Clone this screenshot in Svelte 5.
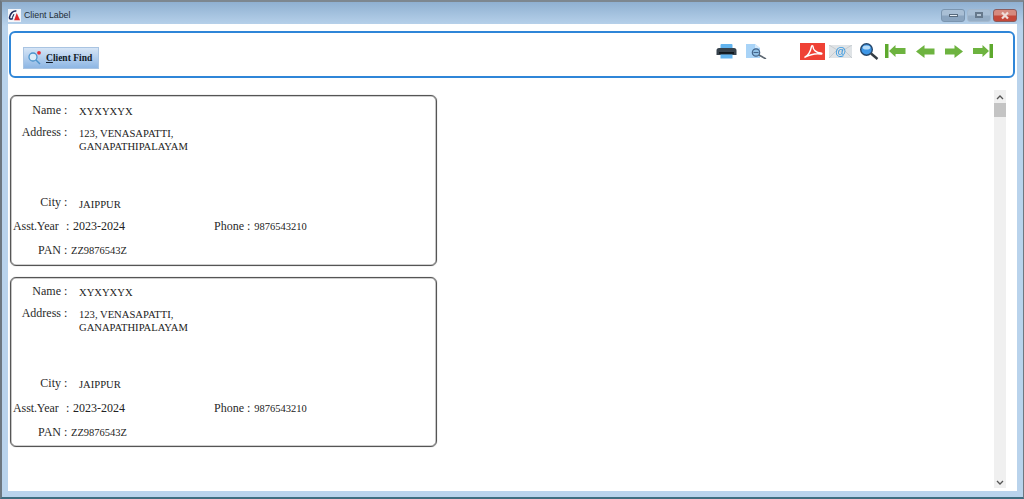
<script>
  const cards = [0, 1];
</script>

<div class="window">
  <header class="titlebar">
    <svg class="logo" width="13" height="13" viewBox="0 0 14 14">
      <rect width="14" height="14" fill="#f4f6fa"/>
      <path d="M9 2.2C5.500 1.600 2.200 5 1.600 9c-.3 2 1.600 2.400 3.600 1" fill="none" stroke="#1d2a5c" stroke-width="1.700"/>
      <path d="M6.400 5.500 4.600 9.500" stroke="#1d2a5c" stroke-width="1.200"/>
      <path d="M9.400 4.200 13 12.200H6.600Z" fill="#e0262b"/>
    </svg>
    <span class="wintitle">Client Label</span>
    <div class="wincontrols">
      <span class="wbtn min"><i></i></span>
      <span class="wbtn max"><i></i></span>
      <span class="wbtn close">
        <svg width="10" height="9" viewBox="0 0 10 9"><path d="M2 1.500l6 6M8 1.500l-6 6" stroke="#f0dcd8" stroke-width="2.200"/></svg>
      </span>
    </div>
  </header>

  <div class="client">
    <div class="toolbar">
      <button class="find">
        <svg width="15" height="15" viewBox="0 0 15 15">
          <circle cx="6" cy="7" r="4" fill="#dcecf8" stroke="#4b93cc" stroke-width="1.300"/>
          <path d="M9 10l4 4" stroke="#4b93cc" stroke-width="1.500"/>
          <circle cx="12" cy="2.800" r="1.900" fill="#e8323a"/>
        </svg>
        <span><u>C</u>lient Find</span>
      </button>
      <div class="tools">
        <svg class="printer" width="21" height="15" viewBox="0 0 21 15">
          <rect x="4.500" y="0" width="12" height="5" rx="1" fill="#62b4ef"/>
          <path d="M3 4h15a2.500 2.500 0 0 1 2.500 2.500V11H.5V6.500A2.500 2.500 0 0 1 3 4Z" fill="#37424c"/>
          <rect x="3" y="8" width="15" height="1.800" fill="#11181e"/>
          <rect x="4.500" y="10.500" width="12" height="4" fill="#62b4ef"/>
        </svg>
        <svg class="preview" width="21" height="15" viewBox="0 0 21 15">
          <path d="M0 0h9l5 4v10H0Z" fill="#a8d3f7"/>
          <path d="M9 0l5 4H9Z" fill="#d4e9fb"/>
          <circle cx="10" cy="8.500" r="3.700" fill="#8fbfe4" stroke="#44648a" stroke-width="1.200"/>
          <path d="M7.500 8.500h5" stroke="#44648a"/>
          <path d="M13 11l7 4" stroke="#5b6670" stroke-width="1.600"/>
        </svg>
        <svg class="pdf" width="25" height="17" viewBox="0 0 25 17">
          <rect width="25" height="17" fill="#ef4135"/>
          <path d="M4.500 14.500c3-1.500 6-6 7-11 .3-1.200 1.500-1.200 1.500 0 0 3 3 6.500 8 6.500 1.500 0 1 1.300-.5 1-4-.6-9-.2-16 3.500Z" fill="none" stroke="#fff" stroke-width="1.400"/>
        </svg>
        <svg class="mail" width="23" height="13" viewBox="0 0 23 13">
          <rect width="23" height="13" fill="#dfe3e6"/>
          <path d="M0 0l11.500 7L23 0M0 13l7-7M23 13l-7-7" fill="none" stroke="#c6ccd0"/>
          <text x="11.500" y="10" text-anchor="middle" font-size="11" font-family="Liberation Sans" fill="#3c9ae0" font-weight="700">@</text>
        </svg>
        <svg class="zoom" width="20" height="17" viewBox="0 0 20 17">
          <circle cx="7.500" cy="6.500" r="5.800" fill="#3d96e6" stroke="#26476b" stroke-width="1.400"/>
          <ellipse cx="7.500" cy="4.500" rx="3.800" ry="2" fill="#b6dcf8"/>
          <path d="M12 10.500l6.500 5.500" stroke="#333c44" stroke-width="2.400"/>
        </svg>
        <svg class="nav first" width="21" height="14" viewBox="0 0 21 14">
          <path d="M0 0h3.500v14H0Z" fill="#5ea92e"/><path d="M4 7l6.500-6v3H20.500v6H10.500V13Z" fill="#6db33f"/>
        </svg>
        <svg class="nav prev" width="19" height="13" viewBox="0 0 19 13">
          <path d="M0 6.500l8.500-6.500v3.500H18.500v6H8.500v3.500Z" fill="#6db33f"/>
        </svg>
        <svg class="nav next" width="18" height="13" viewBox="0 0 18 13">
          <path d="M18 6.500l-8.500-6.500v3.500H0v6h9.500v3.500Z" fill="#6db33f"/>
        </svg>
        <svg class="nav last" width="20" height="14" viewBox="0 0 20 14">
          <path d="M16.500 0H20v14h-3.500Z" fill="#5ea92e"/><path d="M16 7l-6.500-6v3H0v6h9.500V13Z" fill="#6db33f"/>
        </svg>
      </div>
    </div>

    <div class="body">
      <div class="cards">
        {#each cards as c}
          <section class="card">
            <div class="row r-name"><span class="lab">Name</span><span class="sep">:</span><span class="val">XYXYXYX</span></div>
            <div class="row r-addr"><span class="lab">Address</span><span class="sep">:</span><span class="val addr">123, VENASAPATTI,<br />GANAPATHIPALAYAM</span></div>
            <div class="row r-city"><span class="lab">City</span><span class="sep">:</span><span class="val">JAIPPUR</span></div>
            <div class="row r-year">
              <span class="lab yr">Asst.Year</span><span class="sep">:</span><span class="big">2023-2024</span>
              <span class="lab ph">Phone</span><span class="sep2">:</span><span class="val2">9876543210</span>
            </div>
            <div class="row r-pan"><span class="lab">PAN</span><span class="sep pan">:</span><span class="val2">ZZ9876543Z</span></div>
          </section>
        {/each}
      </div>
      <div class="scrollbar">
        <svg width="8" height="5" viewBox="0 0 8 5"><path d="M1 4l3-3 3 3" fill="none" stroke="#555" stroke-width="1.300"/></svg>
        <div class="thumb"></div>
        <div class="track"></div>
        <svg width="8" height="5" viewBox="0 0 8 5"><path d="M1 1l3 3 3-3" fill="none" stroke="#555" stroke-width="1.300"/></svg>
      </div>
    </div>
  </div>
</div>

<style>
  :global(body) { margin: 0; background: #fff; }
  .window {
    box-sizing: border-box;
    width: 1024px;
    height: 499px;
    display: flex;
    flex-direction: column;
    padding: 0 6px 6px;
    border-top: 2px solid #7d8790;
    border-bottom: 2px solid #3f6d80;
    border-left: 2px solid #6d7780;
    border-right: 1px solid #6d7780;
    background: linear-gradient(#8fb0d1 0, #b9d3ec 24px, #b9d3ec 100%);
    font-family: "Liberation Serif", serif;
    color: #222;
  }
  .titlebar {
    box-sizing: border-box;
    height: 22px;
    flex: none;
    display: flex;
    align-items: center;
    gap: 3px;
    padding-top: 4px;
  }
  .logo { flex: none; }
  .wintitle { font: 8.800px "Liberation Sans", sans-serif; color: #222c36; }
  .wincontrols { margin-left: auto; display: flex; gap: 2px; }
  .wbtn {
    box-sizing: border-box;
    height: 13px;
    display: flex;
    align-items: center;
    justify-content: center;
    border: 1px solid #7b95af;
    border-radius: 3px;
  }
  .min { width: 24px; background: linear-gradient(#a9bfd5 45%, #8aa4bf 55%); }
  .min i { width: 9px; height: 3px; background: #e4ebf2; border: 1px solid #56697c; box-sizing: border-box; }
  .max { width: 24px; background: linear-gradient(#a9bfd5 45%, #96aec6 55%); border-color: #a4b9ce; }
  .max i { width: 8px; height: 6px; border: 2px solid #66798c; background: #b5c6d6; box-sizing: border-box; }
  .close { width: 24px; background: linear-gradient(#d68a7f 45%, #c4483a 55%); border-color: #8c5b5b; }
  .client {
    flex: 1;
    min-height: 0;
    display: flex;
    flex-direction: column;
    background: #fff;
    padding: 7px 1px 0 1px;
  }
  .toolbar {
    box-sizing: border-box;
    height: 47px;
    margin-right: 1px;
    flex: none;
    display: flex;
    align-items: center;
    border: 2px solid #2f86d8;
    border-radius: 6px;
    padding: 0 20px 0 12px;
    background: #fff;
  }
  .find {
    box-sizing: border-box;
    width: 76px;
    height: 22px;
    padding: 0 0 0 3px;
    display: flex;
    align-items: center;
    gap: 4px;
    margin-top: 6px;
    border: 1px solid #a9c4e2;
    background: linear-gradient(#d6e5f6, #8db6e4);
    font: bold 9.500px "Liberation Serif", serif;
    color: #111a26;
  }
  .tools { margin-left: auto; display: flex; align-items: center; margin-bottom: 7px; }
  .tools svg { flex: none; display: block; filter: blur(.35px); }
  .preview { margin-left: 9px; }
  .pdf { margin-left: 33px; }
  .mail { margin-left: 4px; }
  .zoom { margin-left: 7px; }
  .first { margin-left: 6px; }
  .prev { margin-left: 10px; }
  .next { margin-left: 10px; }
  .last { margin-left: 10px; }
  .body { flex: 1; min-height: 0; display: flex; }
  .cards {
    flex: 1;
    padding-top: 17px;
    padding-left: 1px;
    display: flex;
    flex-direction: column;
    gap: 11px;
  }
  .card {
    box-sizing: border-box;
    width: 427px;
    height: 171px;
    padding: 1px;
    border: 1px solid #555;
    border-radius: 6px;
    box-shadow: inset 0 0 0 .6px #a0a0a0, 0 0 1px #888;
    display: flex;
    flex-direction: column;
  }
  .card + .card { height: 170px; }
  .row {
    display: flex;
    align-items: baseline;
    position: relative;
    font-size: 10.600px;
  }
  .lab {
    box-sizing: border-box;
    width: 49px;
    flex: none;
    text-align: right;
    font-size: 12px;
    color: #2a2a2a;
  }
  .sep { width: 18px; flex: none; padding-left: 3px; box-sizing: border-box; font-size: 12px; }
  .val { color: #222; position: relative; }
  .r-name { height: 14px; margin-top: 6px; }
  .card + .card .r-name { margin-top: 5px; }
  .r-name .val { top: 1px; }
  .r-addr { height: 70px; margin-top: 8px; }
  .addr { line-height: 13px; top: 1px; }
  .r-city { height: 14px; }
  .r-city .val { top: 2px; }
  .card + .card .r-city .val { top: 1px; }
  .r-year { height: 14px; margin-top: 10px; }
  .card + .card .r-year { margin-top: 11px; }
  .lab.yr { width: 54px; text-align: left; padding-left: 1px; letter-spacing: -.1px; }
  .r-year .sep { width: 7px; padding-left: 0; }
  .big { width: 131px; flex: none; font-size: 12px; }
  .lab.ph { width: 40px; }
  .sep2 { margin-left: 3px; margin-right: 4px; font-size: 12px; }
  .val2 { font-size: 10.500px; }
  .r-pan { height: 14px; margin-top: 10px; }
  .sep.pan { width: 10px; }
  .scrollbar {
    flex: none;
    width: 12px;
    margin: 12px 10px 3px 0;
    background: #f0f0f0;
    display: flex;
    flex-direction: column;
    align-items: center;
  }
  .scrollbar svg { margin: 5px 0 3px; flex: none; }
  .thumb { width: 100%; height: 14px; background: #c4c4c4; flex: none; }
  .track { flex: 1; }
</style>
